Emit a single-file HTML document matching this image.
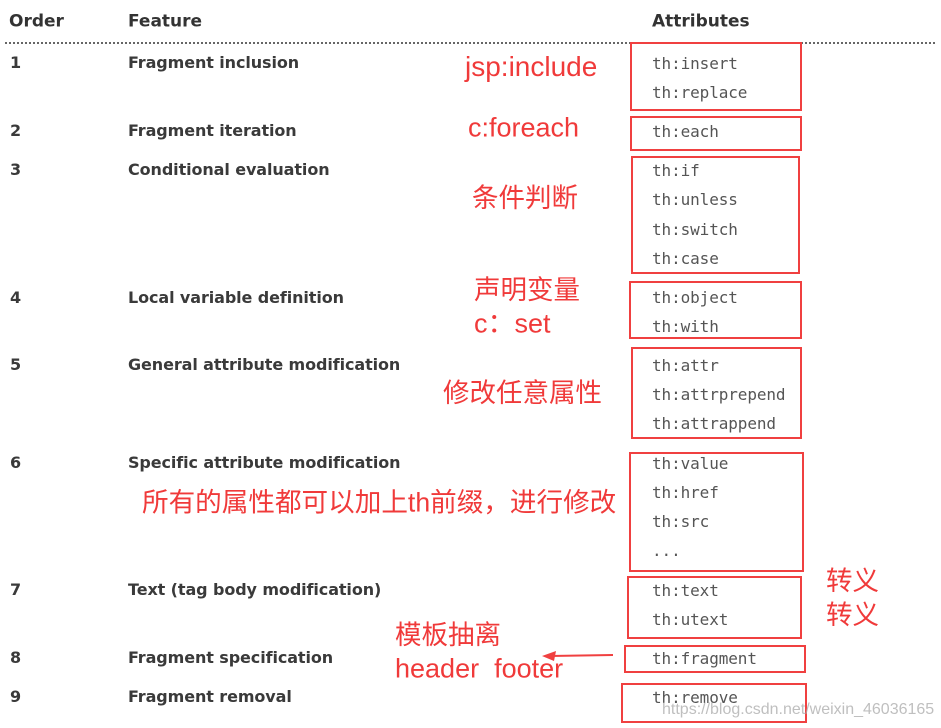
<!DOCTYPE html>
<html><head><meta charset="utf-8"><style>
body{margin:0;width:941px;height:728px;background:#fff;position:relative;overflow:hidden;font-family:"DejaVu Sans","Liberation Sans",sans-serif;color:#333}
.a{position:absolute;white-space:nowrap;line-height:1;transform:translateY(-50%)}
.h{font-weight:bold;font-size:17px;color:#333}
.f{font-size:16px;font-weight:bold;color:#3a3a3a;letter-spacing:-0.1px}
.m{font-family:"DejaVu Sans Mono","Liberation Mono",monospace;font-size:16px;color:#555;letter-spacing:-0.1px}
.r{color:#f03a3a;font-family:"Liberation Sans","Noto Sans CJK SC",sans-serif;font-size:28px}
.c{font-size:26.5px}
.b{position:absolute;border:2px solid #f04040;box-sizing:border-box}
</style></head><body>
<div class="a h" style="left:9px;top:22px">Order</div>
<div class="a h" style="left:128px;top:22px">Feature</div>
<div class="a h" style="left:652px;top:22px">Attributes</div>
<div style="position:absolute;left:5px;top:42px;width:930px;border-top:2px dotted #666"></div>

<div class="a f" style="left:10px;top:63px">1</div><div class="a f" style="left:128px;top:63px">Fragment inclusion</div>
<div class="a f" style="left:10px;top:131px">2</div><div class="a f" style="left:128px;top:131px">Fragment iteration</div>
<div class="a f" style="left:10px;top:170px">3</div><div class="a f" style="left:128px;top:170px">Conditional evaluation</div>
<div class="a f" style="left:10px;top:298px">4</div><div class="a f" style="left:128px;top:298px">Local variable definition</div>
<div class="a f" style="left:10px;top:365px">5</div><div class="a f" style="left:128px;top:365px">General attribute modification</div>
<div class="a f" style="left:10px;top:463px">6</div><div class="a f" style="left:128px;top:463px">Specific attribute modification</div>
<div class="a f" style="left:10px;top:590px">7</div><div class="a f" style="left:128px;top:590px">Text (tag body modification)</div>
<div class="a f" style="left:10px;top:658px">8</div><div class="a f" style="left:128px;top:658px">Fragment specification</div>
<div class="a f" style="left:10px;top:697px">9</div><div class="a f" style="left:128px;top:697px">Fragment removal</div>

<div class="a m" style="left:652px;top:64px">th:insert</div>
<div class="a m" style="left:652px;top:93px">th:replace</div>
<div class="a m" style="left:652px;top:132px">th:each</div>
<div class="a m" style="left:652px;top:171px">th:if</div>
<div class="a m" style="left:652px;top:200px">th:unless</div>
<div class="a m" style="left:652px;top:230px">th:switch</div>
<div class="a m" style="left:652px;top:259px">th:case</div>
<div class="a m" style="left:652px;top:298px">th:object</div>
<div class="a m" style="left:652px;top:327px">th:with</div>
<div class="a m" style="left:652px;top:366px">th:attr</div>
<div class="a m" style="left:652px;top:395px">th:attrprepend</div>
<div class="a m" style="left:652px;top:424px">th:attrappend</div>
<div class="a m" style="left:652px;top:464px">th:value</div>
<div class="a m" style="left:652px;top:493px">th:href</div>
<div class="a m" style="left:652px;top:522px">th:src</div>
<div class="a m" style="left:652px;top:551px">...</div>
<div class="a m" style="left:652px;top:591px">th:text</div>
<div class="a m" style="left:652px;top:620px">th:utext</div>
<div class="a m" style="left:652px;top:659px">th:fragment</div>
<div class="a m" style="left:652px;top:698px">th:remove</div>

<div class="b" style="left:630px;top:42px;width:172px;height:69px"></div>
<div class="b" style="left:630px;top:116px;width:172px;height:35px"></div>
<div class="b" style="left:631px;top:156px;width:169px;height:118px"></div>
<div class="b" style="left:629px;top:281px;width:173px;height:58px"></div>
<div class="b" style="left:631px;top:347px;width:171px;height:92px"></div>
<div class="b" style="left:629px;top:452px;width:175px;height:120px"></div>
<div class="b" style="left:627px;top:576px;width:175px;height:63px"></div>
<div class="b" style="left:624px;top:645px;width:182px;height:28px"></div>
<div class="b" style="left:621px;top:683px;width:186px;height:40px"></div>

<div class="a r" style="left:465px;top:67px">jsp:include</div>
<div class="a r" style="left:468px;top:128px;font-size:27px">c:foreach</div>
<div class="a r c" style="left:472px;top:198px">条件判断</div>
<div class="a r c" style="left:474px;top:290px">声明变量</div>
<div class="a r" style="left:474px;top:324px;font-size:27px">c：set</div>
<div class="a r c" style="left:443px;top:393px">修改任意属性</div>
<div class="a r" style="left:142px;top:503px;font-size:26.6px">所有的属性都可以加上th前缀，进行修改</div>
<div class="a r c" style="left:826px;top:581px">转义</div>
<div class="a r c" style="left:826px;top:615px">转义</div>
<div class="a r c" style="left:395px;top:635px">模板抽离</div>
<div class="a r" style="left:395px;top:669px;font-size:27px">header&nbsp; footer</div>
<svg style="position:absolute;left:540px;top:648px" width="75" height="16"><line x1="10" y1="8" x2="73" y2="7" stroke="#f04040" stroke-width="2"/><polygon points="2,8 16,3 14,13" fill="#f04040"/></svg>
<div class="a" style="left:662px;top:710px;font-family:'Liberation Sans',sans-serif;font-size:16px;color:rgba(170,170,170,0.75)">https://blog.csdn.net/weixin_46036165</div>
</body></html>
